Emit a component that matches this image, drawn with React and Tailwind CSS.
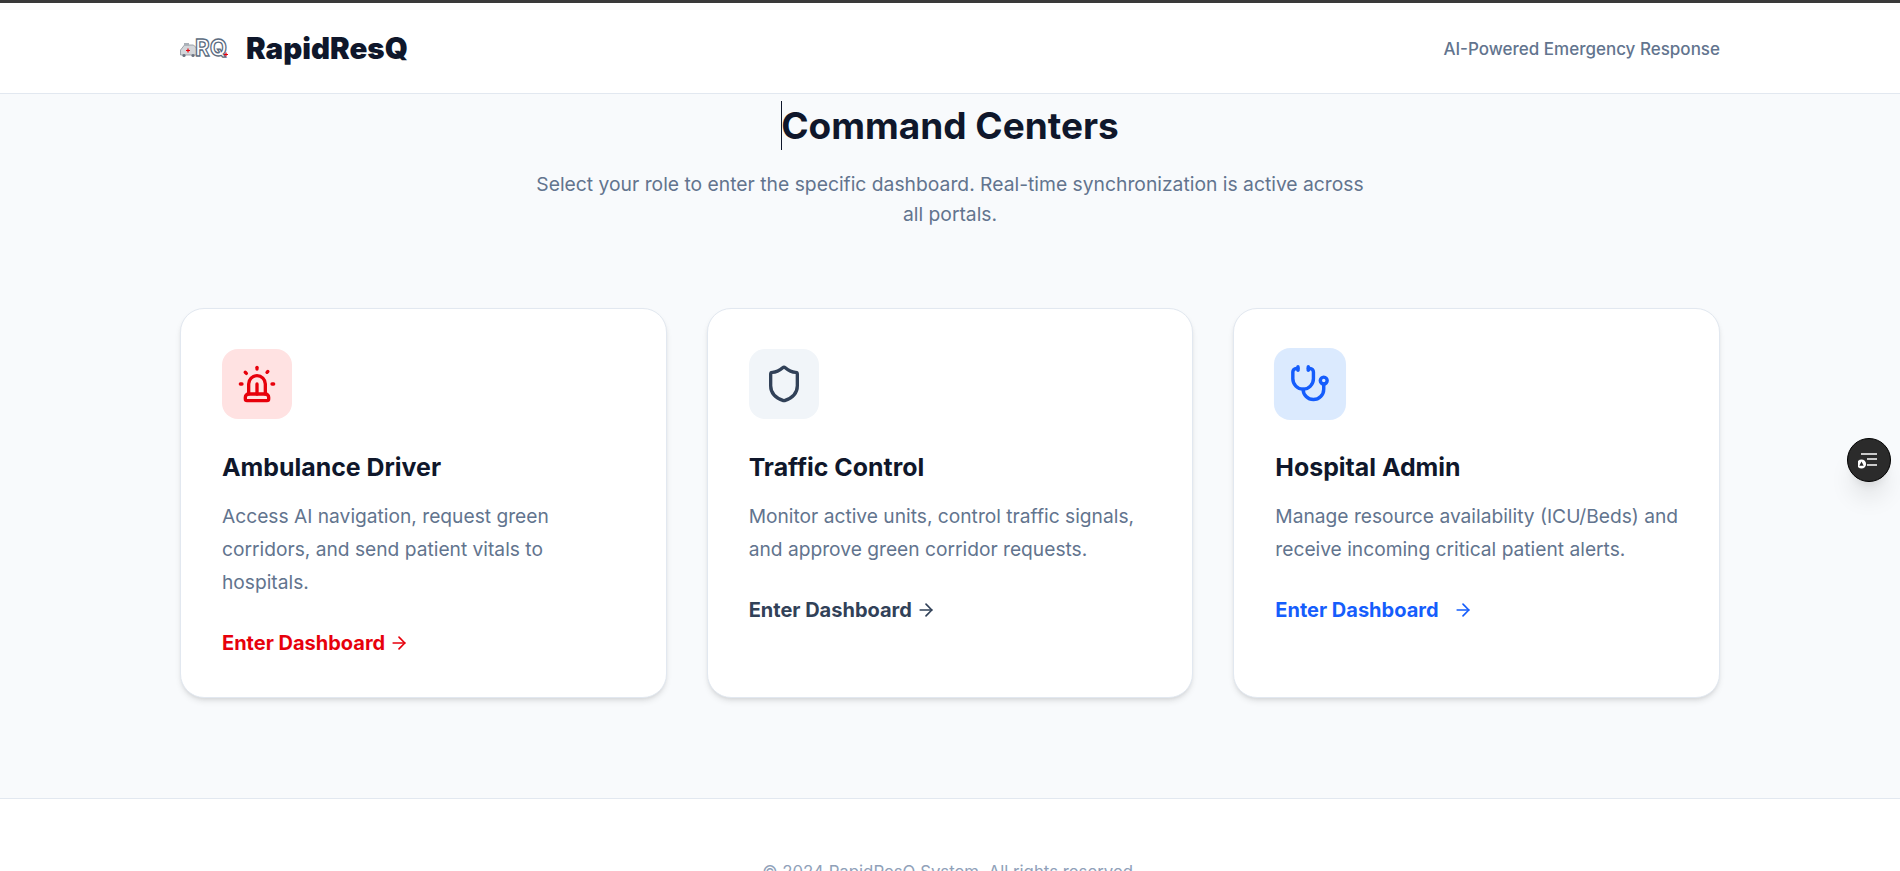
import React from "react";
import { Siren, Shield, Stethoscope, ArrowRight } from "lucide-react";

const roles = [
  {
    title: "Ambulance Driver",
    text: "Access AI navigation, request green corridors, and send patient vitals to hospitals.",
    Icon: Siren,
    box: "bg-red-100 text-red-600",
    link: "text-red-600",
    arrowGap: "ml-1",
  },
  {
    title: "Traffic Control",
    text: "Monitor active units, control traffic signals, and approve green corridor requests.",
    Icon: Shield,
    box: "bg-slate-100 text-slate-700",
    link: "text-slate-700",
    arrowGap: "ml-1",
  },
  {
    title: "Hospital Admin",
    text: "Manage resource availability (ICU/Beds) and receive incoming critical patient alerts.",
    Icon: Stethoscope,
    box: "bg-blue-100 text-blue-600 scale-[1.03]",
    link: "text-blue-600",
    arrowGap: "ml-3.5",
  },
];

const Logo = () => (
  <svg width="50" height="32" viewBox="0 0 50 32" className="shrink-0">
    <path d="M0.5 23v-5l4-5h9l3 3v7z" fill="#d3d6da" stroke="#8b929b" strokeWidth="0.8" />
    <rect x="4" y="11" width="5" height="2.5" fill="#aab0b8" />
    <path d="M6 18.5h4M8 16.5v4" stroke="#e7000b" strokeWidth="1.2" />
    <circle cx="4" cy="23.5" r="1.6" fill="#6b7280" />
    <circle cx="13" cy="23.5" r="1.6" fill="#6b7280" />
    <text
      x="15"
      y="23.5"
      fontFamily="Inter, sans-serif"
      fontSize="23.5"
      fontWeight="700"
      fill="#fff"
      stroke="#5b6b80"
      strokeWidth="1.3"
      textLength="32"
      lengthAdjust="spacingAndGlyphs"
    >
      RQ
    </text>
    <path d="M44 22.5h4M46 20.5v4" stroke="#e7000b" strokeWidth="1.2" />
  </svg>
);

const RoleCard = ({ role }) => {
  const { Icon } = role;
  return (
    <div className="bg-white rounded-3xl border border-slate-200 shadow-md pt-10 pl-[41px] pr-9 h-[390px]">
      <div className={`w-[70px] h-[70px] rounded-2xl flex items-center justify-center ${role.box}`}>
        <Icon size={40} strokeWidth={2} />
      </div>
      <h3 className="mt-8 text-[24.9px] leading-8 font-bold text-slate-900">{role.title}</h3>
      <p className="mt-[17px] text-[19.2px] leading-[33px] text-slate-500">{role.text}</p>
      <div className={`mt-[30px] flex items-center text-[20px] leading-7 font-bold ${role.link}`}>
        <span>Enter Dashboard</span>
        <ArrowRight size={20} className={role.arrowGap} />
      </div>
    </div>
  );
};

export default function App() {
  return (
    <div className="relative h-[871px] overflow-hidden bg-slate-50 font-['Inter',sans-serif]">
      <div className="h-[3px] bg-[#3a3a3a]" />
      <header className="bg-white border-b border-slate-200 h-[91px]">
        <div className="max-w-[1540px] mx-auto h-full flex items-center justify-between">
          <div className="flex items-center gap-4">
            <Logo />
            <span className="text-[29.5px] font-black text-slate-900">RapidResQ</span>
          </div>
          <span className="pt-1 text-[17px] font-medium text-slate-500">AI-Powered Emergency Response</span>
        </div>
      </header>

      <main className="max-w-[1540px] mx-auto h-[704px] pt-[6px]">
        <div className="text-center">
          <h1 className="relative inline-block text-[37px] leading-[52px] font-bold text-slate-900">
            <span className="absolute left-0 top-px w-px h-[49px] bg-slate-900" />
            Command Centers
          </h1>
          <p className="mt-[17px] mx-auto max-w-[848px] text-[19.3px] leading-[30px] text-slate-500">
            Select your role to enter the specific dashboard. Real-time synchronization is active across all portals.
          </p>
        </div>
        <div className="mt-[79px] grid grid-cols-3 gap-10">
          {roles.map((role) => (
            <RoleCard key={role.title} role={role} />
          ))}
        </div>
      </main>

      <footer className="bg-white border-t border-slate-200 pt-[61px] text-center text-[16.8px] text-slate-400">
        © 2024 RapidResQ System. All rights reserved.
      </footer>

      <button className="absolute right-[9px] top-[438px] w-11 h-11 rounded-full bg-[#2b2b2b] border border-black shadow-xl flex items-center justify-center">
        <svg width="22" height="18" viewBox="0 0 22 18">
          <path d="M3 3h16M9 8h10M9 14h10" stroke="#fff" strokeWidth="1.5" />
          <circle cx="3.5" cy="13" r="4.6" fill="#fff" />
          <path d="M3.5 10.5l2.2 4.2h-4.4z" fill="#2b2b2b" />
        </svg>
      </button>
    </div>
  );
}
